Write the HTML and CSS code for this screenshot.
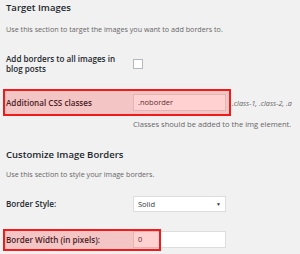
FILE: index.html
```html
<html lang="en">
  <head>
    <meta charset="UTF-8" />
    <meta name="viewport" content="width=device-width, initial-scale=1.0" />
    <title>Image Borders Settings</title>
    <link rel="stylesheet" href="styles.css">
  </head>
  <body>
    <div class="wrap">
      <h2 class="title">Target Images</h2>
      <p class="desc">Use this section to target the images you want to add borders to.</p>

      <div class="row row-check">
        <div class="label">Add borders to all images in blog posts</div>
        <div class="field"><span class="checkbox"></span></div>
      </div>

      <div class="row row-classes">
        <div class="label">Additional CSS classes</div>
        <div class="field">
          <div class="input-line">
            <span class="input">.noborder</span>
            <span class="hint">.class-1, .class-2, .a</span>
          </div>
        </div>
        <div class="highlight hl-classes"></div>
      </div>
      <p class="help">Classes should be added to the img element.</p>

      <h2 class="title title-2">Customize Image Borders</h2>
      <p class="desc desc-2">Use this section to style your image borders.</p>

      <div class="row row-style">
        <div class="label">Border Style:</div>
        <div class="field">
          <span class="select">Solid<span class="arrow">&#9660;</span></span>
        </div>
      </div>

      <div class="row row-width">
        <div class="label">Border Width (in pixels):</div>
        <div class="field"><span class="input">0</span></div>
        <div class="highlight hl-width"></div>
      </div>
    </div>
  </body>
</html>
```

FILE: styles.css
```css
body {
  margin: 0;
  background: #f1f1f1;
  font-family: "Open Sans", sans-serif;
  color: #23282d;
  overflow: hidden;
}

.wrap {
  padding: 0 0 0 6px;
}

.title {
  margin: 0;
  font-size: 9.5px;
  font-weight: 600;
  line-height: 16px;
}

.title-2 {
  margin-top: 17px;
}

.desc {
  margin: 7px 0 0 0;
  font-size: 7.2px;
  line-height: 12px;
  color: #666;
}

.desc-2 {
  margin-top: 5px;
}

.row {
  position: relative;
  display: flex;
  align-items: center;
}

.label {
  width: 122px;
  flex-shrink: 0;
  font-size: 8.1px;
  font-weight: 600;
  line-height: 10px;
}

.row-check .label {
  width: 112px;
  margin-right: 10px;
}

.field {
  flex: 1;
  padding-left: 5px;
}

.row-check {
  margin-top: 19px;
  align-items: flex-start;
}

.checkbox {
  display: block;
  width: 8px;
  height: 8px;
  margin-top: 5px;
  background: #fff;
  border: 1px solid #b4b9be;
}

.row-classes {
  margin-top: 20px;
}

.input-line {
  display: flex;
  align-items: center;
  white-space: nowrap;
}

.input {
  display: block;
  box-sizing: border-box;
  width: 93px;
  height: 17px;
  padding: 0 4px;
  background: #fff;
  border: 1px solid #ddd;
  font-size: 7.5px;
  line-height: 15px;
  color: #32373c;
}

.hint {
  margin-left: 6px;
  font-size: 7.2px;
  font-style: italic;
  color: #666;
}

.help {
  margin: 7px 0 0 127px;
  font-size: 7.6px;
  line-height: 12px;
  color: #666;
  white-space: nowrap;
}

.row-style {
  margin-top: 16px;
}

.select {
  display: flex;
  justify-content: space-between;
  box-sizing: border-box;
  width: 93px;
  height: 16px;
  padding: 0 4px;
  background: #fff;
  border: 1px solid #ddd;
  font-size: 7.5px;
  line-height: 14px;
  color: #32373c;
}

.arrow {
  font-size: 5px;
}

.row-width {
  margin-top: 19px;
}

.row-width .input {
  height: 17px;
}

.highlight {
  position: absolute;
  left: -3px;
  background: rgba(255, 0, 0, 0.18);
  border: 2px solid #f21a1a;
  box-sizing: border-box;
}

.hl-classes {
  top: -5px;
  bottom: -5px;
  width: 228px;
}

.hl-width {
  top: -2px;
  bottom: -3px;
  width: 158px;
}
```
